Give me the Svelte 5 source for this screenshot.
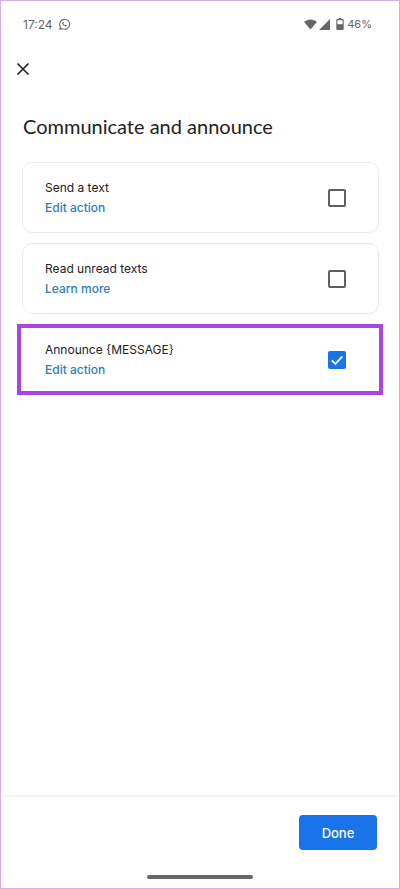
<script>
    const items = [
        { title: "Send a text", link: "Edit action", checked: false },
        { title: "Read unread texts", link: "Learn more", checked: false },
        { title: "Announce {MESSAGE}", link: "Edit action", checked: true }
    ];
</script>

<div class="screen">
    <div class="status">
        <div class="status-side">
            <span>17:24</span>
            <svg class="wa" viewBox="0 0 24 24" width="13" height="13">
                <path d="M3.2 20.8l1.2-4.6a9.2 9.2 0 1 1 3.5 3.4z" fill="none" stroke="#666" stroke-width="2" stroke-linejoin="round" />
                <path d="M8.7 7.6c.5-.5 1.200-.4 1.400.2l.6 1.400c.1.300 0 .6-.2.800l-.5.6c.7 1.300 1.700 2.200 3 2.800l.7-.7c.2-.2.500-.3.800-.2l1.400.7c.5.200.6.900.2 1.300-.8 1-2 1.200-3.300.7-2.300-.9-4-2.500-4.800-4.700-.4-1.100-.2-2 .7-2.900z" fill="#666" />
            </svg>
        </div>
        <div class="status-side">
            <svg viewBox="0 0 14 11" width="13" height="11">
                <path d="M0 2.600C1.900 1 4.300 0 7 0s5.100 1 7 2.600L7 11z" fill="#666" />
            </svg>
            <svg viewBox="0 0 11 11" width="11" height="11">
                <path d="M11 0v11H0z" fill="#666" />
            </svg>
            <svg class="batt" viewBox="0 0 8 13" width="8" height="12">
                <path d="M2.500 0h3v1.200H7a1 1 0 0 1 1 1V12a1 1 0 0 1-1 1H1a1 1 0 0 1-1-1V2.200a1 1 0 0 1 1-1h1.500z" fill="#666" />
                <rect x="1.200" y="2.400" width="5.600" height="4.300" fill="#fff" />
            </svg>
            <span class="pct">46%</span>
        </div>
    </div>

    <button class="close" aria-label="Close">
        <svg viewBox="0 0 14 14" width="14" height="14">
            <path d="M1.500 1.500l11 11M12.500 1.500l-11 11" stroke="#222" stroke-width="1.600" fill="none" />
        </svg>
    </button>

    <h1>Communicate and announce</h1>

    <div class="list">
        {#each items as item}
            <div class="card" class:highlight={item.checked}>
                <div class="text">
                    <div class="title">{item.title}</div>
                    <div class="link">{item.link}</div>
                </div>
                <span class="box" class:checked={item.checked}>
                    {#if item.checked}
                        <svg viewBox="0 0 18 18" width="18" height="18">
                            <path d="M3.800 9.400l3.600 3.500 7-7.600" stroke="#fff" stroke-width="1.800" fill="none" />
                        </svg>
                    {/if}
                </span>
            </div>
        {/each}
    </div>

    <div class="footer">
        <button class="done">Done</button>
    </div>
    <div class="home"></div>
</div>

<style>
    :global(body) {
        background: #fff;
    }

    .screen {
        box-sizing: border-box;
        width: 400px;
        height: 889px;
        display: flex;
        flex-direction: column;
        border: 1px solid #d3afe4;
        background: #fff;
        font-family: Inter, "Noto Sans", sans-serif;
        color: #222;
    }

    .status {
        display: flex;
        justify-content: space-between;
        align-items: center;
        height: 14px;
        margin: 16px 27px 0 22px;
        font-size: 12px;
        color: #666;
    }

    .status-side {
        display: flex;
        align-items: center;
        gap: 2px;
    }

    .wa {
        margin-left: 3px;
    }

    .batt {
        margin: 0 1px 0 4px;
    }

    .pct {
        font-size: 11px;
    }

    .close {
        align-self: flex-start;
        display: flex;
        padding: 0;
        margin: 31px 0 0 15px;
        border: none;
        background: none;
    }

    h1 {
        margin: 36px 0 0 22px;
        font-family: Lato, Inter, sans-serif;
        font-size: 20px;
        line-height: 28px;
        font-weight: 400;
        color: #222;
    }

    .list {
        display: flex;
        flex-direction: column;
        gap: 10px;
        margin: 22px 20px 0 21px;
    }

    .card {
        box-sizing: border-box;
        height: 71px;
        display: flex;
        align-items: center;
        justify-content: space-between;
        padding: 0 32px 0 22px;
        border: 1px solid #ebebeb;
        border-radius: 10px;
    }

    .card.highlight {
        margin: 0 -4px 0 -5px;
        padding: 0 33px 0 24px;
        border: 4.500px solid #a945e4;
        border-radius: 0;
    }

    .title {
        font-size: 12px;
        line-height: 18px;
        color: #222;
    }

    .link {
        margin-top: 2px;
        font-size: 12px;
        line-height: 18px;
        font-weight: 500;
        color: #2f7dbd;
    }

    .box {
        box-sizing: border-box;
        width: 18px;
        height: 18px;
        border: 2px solid #5f5f5f;
        border-radius: 2px;
    }

    .box.checked {
        display: flex;
        border: none;
        background: #1a73e8;
    }

    .footer {
        margin-top: auto;
        display: flex;
        justify-content: flex-end;
        padding: 18px 22px 0 0;
        border-top: 2px solid #f4f4f4;
    }

    .done {
        width: 78px;
        height: 35px;
        border: none;
        border-radius: 4px;
        background: #1a73e8;
        color: #fff;
        font-family: inherit;
        font-size: 13px;
        font-weight: 500;
    }

    .home {
        align-self: center;
        width: 106px;
        height: 4px;
        margin: 25px 0 9px;
        border-radius: 2px;
        background: #666;
    }
</style>
